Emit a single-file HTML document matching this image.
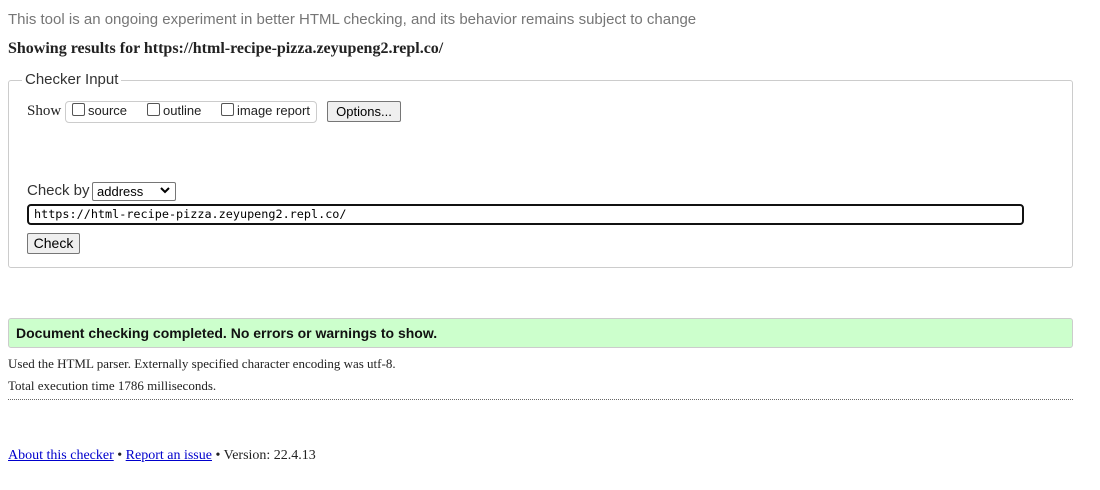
<!DOCTYPE html>
<html><head><style>
body{margin:0;width:1100px;height:490px;background:#fff;position:relative;font-family:"Liberation Sans",sans-serif;overflow:hidden}
.a{position:absolute;white-space:nowrap}
.serif{font-family:"Liberation Serif",serif}
.cb{display:inline-block;width:11px;height:11px;border:1px solid #555;border-radius:2px;vertical-align:-1px;margin-right:3px;background:#fff}
.btn{position:absolute;border:1px solid #767676;border-radius:2px;background:#efefef;font-size:13px;color:#000;text-align:center;box-sizing:border-box}
a{color:#00c}
</style></head><body>
<div class="a" style="left:8px;top:11px;font-size:15px;color:#767676">This tool is an ongoing experiment in better HTML checking, and its behavior remains subject to change</div>
<div class="a serif" style="left:8px;top:40px;font-size:16px;font-weight:bold;color:#222">Showing results for https://html-recipe-pizza.zeyupeng2.repl.co/</div>
<div class="a" style="left:8px;top:80px;width:1063px;height:186px;border:1px solid #ccc;border-radius:3px"></div>
<div class="a" style="left:22px;top:71px;background:#fff;padding:0 3px;font-size:15px;color:#333">Checker Input</div>
<div class="a serif" style="left:27px;top:103px;font-size:15px;color:#222">Show</div>
<div class="a" style="left:65px;top:101px;width:250px;height:20px;border:1px solid #ccc;border-radius:4px"></div>
<div class="a" style="left:72px;top:103px;font-size:13px;color:#222"><span class="cb"></span>source</div>
<div class="a" style="left:147px;top:103px;font-size:13px;color:#222"><span class="cb"></span>outline</div>
<div class="a" style="left:221px;top:103px;font-size:13px;color:#222"><span class="cb"></span>image report</div>
<div class="btn" style="left:327px;top:101px;width:74px;height:21px;line-height:19px">Options...</div>
<div class="a" style="left:27px;top:182px;font-size:15px;color:#333">Check by</div>
<div class="a" style="left:92px;top:182px;width:84px;border:1px solid #767676;border-radius:2px;font-size:13px;line-height:17px;padding-left:4px;box-sizing:border-box;height:19px">address</div>
<svg class="a" style="left:160px;top:186px" width="10" height="8"><path d="M1 2l4 4 4-4" stroke="#000" stroke-width="2" fill="none"/></svg>
<div class="a" style="left:27px;top:204px;width:997px;height:21px;border:2px solid #111;border-radius:4px;box-sizing:border-box;font-family:'DejaVu Sans Mono',monospace;font-size:11.8px;line-height:17px;padding-left:5px">https://html-recipe-pizza.zeyupeng2.repl.co/</div>
<div class="btn" style="left:27px;top:233px;width:53px;height:21px;line-height:19px;font-size:14px">Check</div>
<div class="a" style="left:8px;top:318px;width:1063px;height:28px;background:#ccffcc;border:1px solid #ccc;border-radius:3px"></div>
<div class="a" style="left:16px;top:325px;font-size:14px;font-weight:bold;color:#111">Document checking completed. No errors or warnings to show.</div>
<div class="a serif" style="left:8px;top:356px;font-size:13px;color:#222">Used the HTML parser. Externally specified character encoding was utf-8.</div>
<div class="a serif" style="left:8px;top:378px;font-size:13px;color:#222">Total execution time 1786 milliseconds.</div>
<div class="a" style="left:8px;top:399px;width:1065px;border-top:1px dotted #666"></div>
<div class="a serif" style="left:8px;top:448px;font-size:14px;color:#222"><a href="#">About this checker</a> • <a href="#">Report an issue</a> • Version: 22.4.13</div>
</body></html>
